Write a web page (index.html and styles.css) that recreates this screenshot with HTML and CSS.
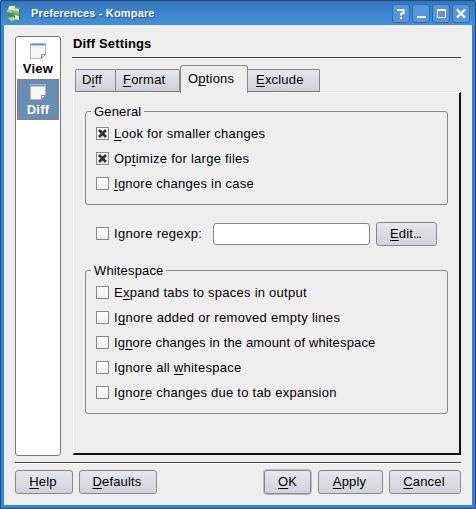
FILE: index.html
```html
<!DOCTYPE html>
<html lang="en">
<head>
<meta charset="utf-8">
<title>Preferences - Kompare</title>
<link rel="stylesheet" href="styles.css">
</head>
<body>
<div class="window">
  <header class="titlebar">
    <svg class="appicon" width="14" height="17" viewBox="0 0 14 17">
      <path d="M2 1l5-1 1 2 5 1v12l-4 1-8-1L0 5z" fill="#5f9f50"/>
      <path d="M2 1h6l-1 4-6 1z" fill="#e4eedf"/>
      <path d="M7 3l6 1-1 3-6-1z" fill="#c9dcc4"/>
      <path d="M0 5l6 1-1 2-5-1z" fill="#86e05a"/>
      <path d="M6 6l7 1v3l-6-1z" fill="#6bcf4a"/>
      <path d="M1 8l5 1v3l-5-1z" fill="#4a76c4"/>
      <path d="M8 10l4 1v4l-4-1z" fill="#dfeeda"/>
      <path d="M1 13l6-1 1 3-4 1z" fill="#a5e67c"/>
      <path d="M12.500 4v11" stroke="#3d6d3a"/>
    </svg>
    <h1>Preferences - Kompare</h1>
    <div class="controls">
      <span class="ctl"><svg width="16" height="17" viewBox="0 0 16 17"><path d="M5 6V5h5.500v3L8 9v1.500M8 12v2" fill="none" stroke="#fff" stroke-width="2"/></svg></span>
      <span class="ctl"><svg width="16" height="17" viewBox="0 0 16 17"><path d="M4 12h9" stroke="#fff" stroke-width="2"/></svg></span>
      <span class="ctl"><svg width="16" height="17" viewBox="0 0 16 17"><path d="M4.500 5v7.500h8V5" fill="none" stroke="#fff"/><path d="M4 5h9" stroke="#fff" stroke-width="2"/></svg></span>
      <span class="ctl"><svg width="16" height="17" viewBox="0 0 16 17"><path d="M4 4.500l8 8M12 4.500l-8 8" stroke="#fff" stroke-width="2.400"/></svg></span>
    </div>
  </header>
  <main class="main">
    <nav class="side">
      <div class="page"><svg width="16" height="16" viewBox="0 0 16 16"><path d="M.5.500h15v11l-4 4H.500z" fill="#f6f6f6" stroke="#b4b4b4"/><path d="M1 1.500h14" stroke="#5b8cf0"/><path d="M1 2.500h14" stroke="#b4ccfa"/><path d="M11.500 15.500v-4h4z" fill="#fff" stroke="#8c8c8c"/></svg><span>View</span></div>
      <div class="page selected"><svg width="16" height="16" viewBox="0 0 16 16"><path d="M.5.500h15v11l-4 4H.500z" fill="#f6f6f6" stroke="#b4b4b4"/><path d="M1 1.500h14" stroke="#5b8cf0"/><path d="M1 2.500h14" stroke="#b4ccfa"/><path d="M11.500 15.500v-4h4z" fill="#fff" stroke="#8c8c8c"/></svg><span>Diff</span></div>
    </nav>
    <section class="content">
      <h2>Diff Settings</h2>
      <div class="tabs">
        <div class="tab t1">D<u>i</u>ff</div><div class="tab t2"><u>F</u>ormat</div><div class="tab active">O<u>p</u>tions</div><div class="tab t4"><u>E</u>xclude</div>
      </div>
      <div class="panel">
        <div class="group general">
          <div class="legend">General</div>
          <div class="check"><i class="box"><svg width="11" height="11" viewBox="0 0 11 11"><path d="M2 2l7 7M9 2L2 9" stroke="#333" stroke-width="2.800"/></svg></i><span><u>L</u>ook for smaller changes</span></div>
          <div class="check"><i class="box"><svg width="11" height="11" viewBox="0 0 11 11"><path d="M2 2l7 7M9 2L2 9" stroke="#333" stroke-width="2.800"/></svg></i><span>Op<u>t</u>imize for large files</span></div>
          <div class="check"><i class="box"></i><span><u>I</u>gnore changes in case</span></div>
        </div>
        <div class="regexp">
          <div class="check loose"><i class="box"></i><span>Ignore regexp:</span></div>
          <div class="field"></div>
          <div class="button edit"><u>E</u>dit<span class="dots">...</span></div>
        </div>
        <div class="group white">
          <div class="legend">Whitespace</div>
          <div class="check"><i class="box"></i><span>E<u>x</u>pand tabs to spaces in output</span></div>
          <div class="check loose"><i class="box"></i><span>I<u>g</u>nore added or removed empty lines</span></div>
          <div class="check tight"><i class="box"></i><span>Ig<u>n</u>ore changes in the amount of whitespace</span></div>
          <div class="check"><i class="box"></i><span>Ignore all <u>w</u>hitespace</span></div>
          <div class="check"><i class="box"></i><span>Igno<u>r</u>e changes due to tab expansion</span></div>
        </div>
      </div>
    </section>
  </main>
  <footer class="footer">
    <div class="button help"><u>H</u>elp</div>
    <div class="button defaults"><u>D</u>efaults</div>
    <div class="button ok"><u>O</u>K</div>
    <div class="button apply"><u>A</u>pply</div>
    <div class="button cancel"><u>C</u>ancel</div>
  </footer>
</div>
</body>
</html>
```
FILE: styles.css
```css
* { box-sizing: border-box; }
body { margin: 0; font: 13px/16px "Liberation Sans", Arial, sans-serif; color: #000; letter-spacing: .25px; }
svg { display: block; flex: none; }
u { text-decoration: underline; text-decoration-thickness: 1px; text-underline-offset: 2px; text-decoration-skip-ink: none; }
.window { width: 476px; height: 509px; background: #eee; border: solid #3884d4; border-width: 0 4px 4px; display: flex; flex-direction: column; outline: 1px solid #1d4c80; outline-offset: -1px; border-radius: 2px 2px 0 0; }
.titlebar { height: 25px; flex: none; margin: 0 -4px; padding: 4px 6px 0 7px; display: flex; align-items: flex-start; background: linear-gradient(#26578c 0, #3679bd 2px, #4190de); border-radius: 2px 2px 0 0; }
.appicon { margin-top: 1px; }
h1 { margin: 1px 0 0 10px; font-size: 11px; line-height: 16px; letter-spacing: .15px; color: #fff; text-shadow: 1px 1px 1px #1d4e86; flex: 1; }
.controls { display: flex; gap: 2px; }
.ctl { width: 18px; height: 19px; border: 1px solid #2d6bad; border-radius: 3px; background: #5796da; }
.main { display: flex; height: 431px; padding: 11px 11px 0; }
.side { width: 46px; height: 420px; border: 1px solid #777; border-radius: 3px; background: #fff; padding: 1px; }
.page { height: 41px; padding-top: 5px; display: flex; flex-direction: column; align-items: center; font-weight: bold; }
.page span { margin-top: 2px; }
.selected { background: #668db5; color: #fff; border: 1px dotted #a07850; padding-top: 4px; }
.content { margin-left: 11px; width: 389px; }
h2 { margin: 0; height: 22px; padding-left: 1px; font-size: 13px; line-height: 16px; letter-spacing: .15px; border-bottom: 1px solid #444; box-shadow: 0 1px #fff; }
.tabs { display: flex; height: 34px; padding: 8px 0 0 3px; align-items: flex-end; }
.tab { height: 23px; border: 1px solid #888; border-bottom-color: #777; border-left-width: 0; background: linear-gradient(#e6e6ec, #d1d2d9); line-height: 20px; padding-left: 7px; border-radius: 0 2px 0 0; letter-spacing: .2px; }
.t1 { width: 41px; border-left-width: 1px; border-top-left-radius: 2px; padding-left: 6px; }
.t2 { width: 64px; }
.active { width: 68px; height: 28px; margin-bottom: -1px; background: #eee; border-left-width: 1px; border-bottom: 0; border-radius: 3px 3px 0 0; line-height: 25px; position: relative; }
.t4 { width: 72px; padding-left: 8px; }
.panel { width: 388px; height: 363px; margin-left: 1px; border: 1px solid #fff; border-right: 2px solid #111; border-bottom: 2px solid #111; padding: 18px 11px 0; }
.group { width: 363px; border: 1px solid #888; border-radius: 3px; padding-left: 10px; }
.legend { width: max-content; height: 16px; margin: -8px 0 6px -5px; padding: 0 3px; background: #eee; letter-spacing: .15px; }
.general { height: 94px; }
.white { height: 144px; }
.check { height: 16px; margin-bottom: 9px; display: flex; align-items: flex-start; white-space: nowrap; }
.loose { letter-spacing: .31px; }
.tight { letter-spacing: .15px; }
.box { width: 13px; height: 13px; flex: none; border: 1px solid #888; background: linear-gradient(#fff, #eee); margin: 1px 5px 0 0; }
.regexp { display: flex; height: 24px; margin: 17px 0 24px 11px; align-items: center; }
.regexp .check { margin: 0; width: 117px; }
.field { width: 157px; height: 22px; border: 1px solid #888; border-radius: 3px; background: #fff; margin-right: 6px; }
.button { height: 24px; border: 1px solid #888; border-radius: 3px; background: linear-gradient(#e6e6ec, #d1d2d9); line-height: 22px; text-align: center; letter-spacing: .15px; }
.edit { width: 61px; padding-right: 2px; }
.dots { letter-spacing: -.9px; }
.footer { margin: 6px 11px 0; height: 40px; border-top: 1px solid #444; box-shadow: inset 0 1px #fff; padding-top: 7px; display: flex; }
.help { width: 58px; margin-right: 6px; padding-right: 2px; }
.defaults { width: 78px; padding-right: 2px; }
.ok { width: 47px; margin-left: auto; margin-right: 7px; box-shadow: 0 0 0 1px #bbb; }
.apply { width: 65px; margin-right: 6px; padding-right: 2px; }
.cancel { width: 72px; padding-right: 2px; }
```
